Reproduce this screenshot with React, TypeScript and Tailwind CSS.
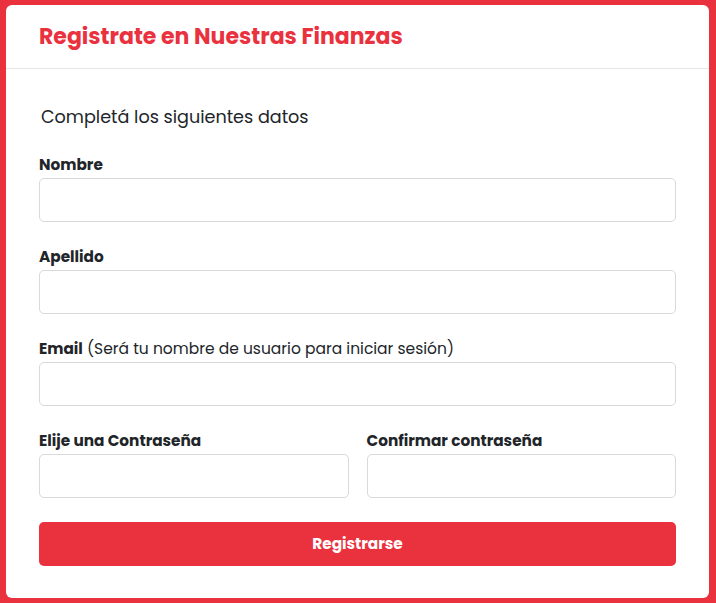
import React from "react";

const FONT = { fontFamily: "Poppins, 'DejaVu Sans', sans-serif" };

function Field({ label, hint }: { label: string; hint?: string }) {
  return (
    <div className="flex flex-col">
      <label className="text-[15.3px] leading-[22px] font-bold text-[#212529] mb-[2px]">
        {label}
        {hint && <span className="font-normal text-[15.5px]"> {hint}</span>}
      </label>
      <input className="h-[44px] w-full rounded-[5px] border border-[#d9d9d9] bg-white px-3 outline-none" />
    </div>
  );
}

export default function App() {
  return (
    <div className="min-h-[603px] bg-[#e9323e] pt-[5px] pl-[6px] pr-[7px] pb-[6px]" style={FONT}>
      <div className="rounded-[6px] bg-white">
        <div className="h-[64px] flex items-center px-[33px] border-b border-[#e6e6e6]">
          <h1 className="text-[22px] font-bold text-[#e9323e] leading-none">Registrate en Nuestras Finanzas</h1>
        </div>
        <div className="px-[33px] pt-[35px] pb-[32px] flex flex-col gap-[24px]">
          <p className="text-[17.6px] leading-[26px] text-[#212529] pl-[2px]">Completá los siguientes datos</p>
          <Field label="Nombre" />
          <Field label="Apellido" />
          <Field label="Email" hint="(Será tu nombre de usuario para iniciar sesión)" />
          <div className="grid grid-cols-2 gap-[18px]">
            <Field label="Elije una Contraseña" />
            <Field label="Confirmar contraseña" />
          </div>
          <button className="h-[44px] rounded-[5px] bg-[#e9323e] text-white text-[15.3px] font-bold">
            Registrarse
          </button>
        </div>
      </div>
    </div>
  );
}
